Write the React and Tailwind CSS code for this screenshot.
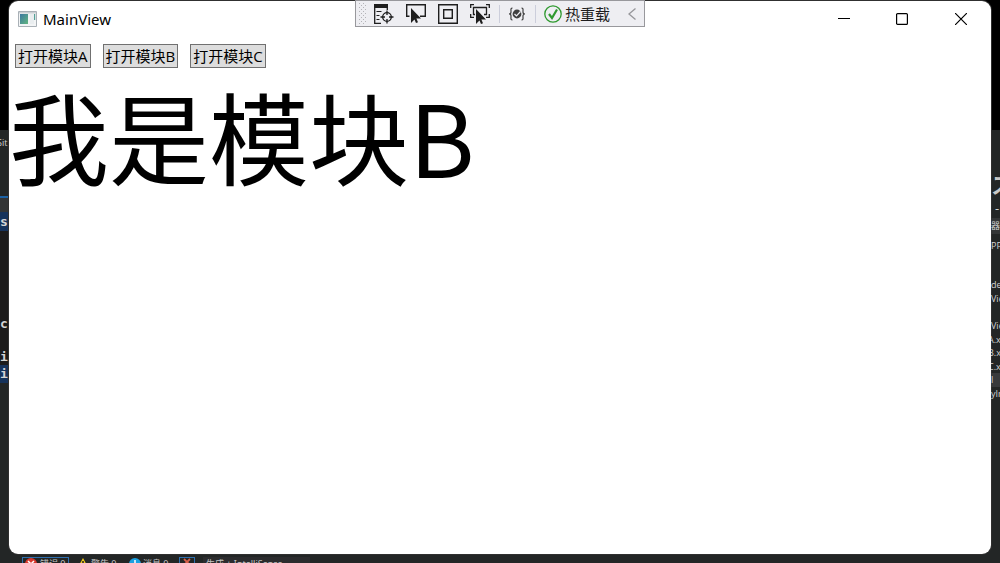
import React, { useState } from "react";

const MODULES = ["A", "B", "C"];

const LEFT_LINES = [
  { text: "", row: "h-[5px]" },
  { text: "Sit", row: "h-4 font-['Open_Sans',sans-serif] text-[9px] leading-4 -ml-[3px] text-[#d0d0d0]" },
  { text: "", row: "h-[45px]" },
  { text: "", row: "h-[2px] bg-[#1c62a5]" },
  { text: "", row: "h-[14px] bg-[#333536]" },
  { text: "s", row: "h-[19px] bg-[#16335c] text-[13px] font-bold leading-[19px]" },
  { text: "", row: "h-[84px] bg-[#1c1b1b]" },
  { text: "c", row: "h-[17px] bg-[#1c1b1b] text-[13px] font-bold leading-[17px]" },
  { text: "", row: "h-4 bg-[#1c1b1b]" },
  { text: "i", row: "h-[17px] bg-[#1c1b1b] text-[13px] font-bold leading-[17px]" },
  { text: "i", row: "h-[18px] bg-[#16335c] text-[13px] font-bold leading-[17px]" },
];

const RIGHT_LINES = [
  { text: "", row: "h-[40px]" },
  { text: "ス", row: "h-7 text-[22px] leading-7 font-bold text-[#c8c8c8]" },
  { text: "-", row: "h-5 text-[13px] leading-5 pl-1" },
  { text: "器", row: "h-4 text-[9px] leading-4 bg-[#343637]" },
  { text: "", row: "h-1" },
  { text: "PP", row: "h-4 text-[9px] leading-4" },
  { text: "", row: "h-6" },
  { text: "de", row: "h-[14px] text-[9px] leading-[14px]" },
  { text: "Vie", row: "h-[14px] text-[9px] leading-[14px]" },
  { text: "", row: "h-[13px]" },
  { text: "Vie", row: "h-[14px] text-[9px] leading-[14px]" },
  { text: "A.x", row: "h-[13px] text-[9px] leading-[13px] -ml-[3px]" },
  { text: "B.x", row: "h-[14px] text-[9px] leading-[14px] -ml-[3px]" },
  { text: "C.x", row: "h-[13px] text-[9px] leading-[13px] -ml-[3px]" },
  { text: "l", row: "h-[14px] text-[9px] leading-[14px] bg-[#383a3c]" },
  { text: "yIn", row: "h-[14px] text-[9px] leading-[14px]" },
];

function EdgeStrip({ lines, mono }) {
  return (
    <div
      className={
        "w-[9px] shrink-0 overflow-hidden whitespace-nowrap pt-[129px] text-[#d4d4d4] " +
        (mono ? "font-['DejaVu_Sans_Mono','Noto_Sans_CJK_SC',monospace]" : "font-['Open_Sans','Noto_Sans_CJK_SC',sans-serif]")
      }
    >
      {lines.map((line, i) => (
        <div key={i} className={line.row}>{line.text}</div>
      ))}
    </div>
  );
}

function DebugToolbar() {
  return (
    <div className="absolute left-1/2 top-0 flex h-[27px] -translate-x-1/2 items-center border border-[#98989c] bg-[#eeeef2] pl-[3px] pr-2 text-[#1e1e1e]">
      <svg className="mr-2 h-[22px] w-[7px]" viewBox="0 0 7 22" fill="#b4b4b8" aria-hidden="true">
        {[0, 4, 8, 12, 16, 20].map((y) => (
          <g key={y}>
            <path d={`M0 ${y}h1v1H0zM4 ${y}h1v1H4z`} />
            <path d={`M2 ${y + 2}h1v1H2zM6 ${y + 2}h1v1H6z`} />
          </g>
        ))}
      </svg>
      <div className="flex gap-3">
        <button aria-label="转到实时可视化树">
          <svg className="block size-5" viewBox="0 0 20 20" fill="none" stroke="#1e1e1e" strokeWidth="1.3">
            <path d="M0 0h14v4H0z" fill="#1e1e1e" stroke="none" />
            <path d="M.7 3v16.300H7M13.300 3v3" />
            <path d="M2.500 7.500h5M2.500 11.500h3M2.500 15.500h3" strokeWidth="1" />
            <circle cx="13" cy="13" r="4.300" />
            <path d="M13 6.500v4.500M13 15v4.500M6.500 13H11M15 13h4.500" />
          </svg>
        </button>
        <button aria-label="选择元素">
          <svg className="block size-5" viewBox="0 0 20 20" fill="none" stroke="#1e1e1e" strokeWidth="1.4">
            <path d="M3.500 12.300H.7V.7h18.600v11.600H14" />
            <path d="M5 4v15l3.500-3.500L10 19l2-.8-1.600-3.700H15z" fill="#1e1e1e" stroke="none" />
          </svg>
        </button>
        <button aria-label="显示布局装饰器">
          <svg className="block size-5" viewBox="0 0 20 20" fill="none" stroke="#1e1e1e" strokeWidth="1.400">
            <path d="M.7.7h18.600v18.600H.7zM5.700 5.700h8.600v8.600H5.700z" />
          </svg>
        </button>
        <button aria-label="跟踪具有焦点的元素">
          <svg className="block size-5" viewBox="0 0 20 20" fill="none" stroke="#1e1e1e" strokeWidth="1.300">
            <path d="M.7 4V.7H4M16 .7h3.300V4M19.300 10v3.300H16M4 13.300H.7V10" />
            <path d="M5 10.500H3.500v-7h13v7H14" />
            <path d="M6 5v15l3.500-3.500L11 20l2-.8-1.600-3.700H16z" fill="#1e1e1e" stroke="none" />
          </svg>
        </button>
      </div>
      <span className="ml-[9px] h-[18px] w-px bg-[#cccedb]" />
      <button className="ml-2" aria-label="绑定失败">
        <svg className="block size-[18px]" viewBox="0 0 18 18" fill="none" stroke="#404040" strokeWidth="1.200">
          <path d="M4.500 3C2.500 3 3 4.500 3 7c0 1.300-.6 2-2 2 1.400 0 2 .7 2 2 0 2.500-.5 4 1.500 4M13.500 3c2 0 1.500 1.500 1.500 4 0 1.300.6 2 2 2-1.400 0-2 .7-2 2 0 2.500.5 4-1.500 4" />
          <circle cx="9" cy="9" r="4.400" fill="#404040" stroke="none" />
          <path d="M6.500 9l2 2 4-4.500" stroke="#eeeef2" />
        </svg>
      </button>
      <span className="ml-[9px] h-[18px] w-px bg-[#cccedb]" />
      <button className="ml-2 flex items-center gap-[3px] text-[15px] leading-5">
        <svg className="size-[18px]" viewBox="0 0 18 18" fill="none" stroke="#2f9a2f" aria-hidden="true">
          <circle cx="9" cy="9" r="8.200" strokeWidth="1.300" />
          <path d="M5 9l3 4 5-8.500" strokeWidth="2.200" />
        </svg>
        热重载
      </button>
      <button className="ml-[18px]" aria-label="折叠工具栏">
        <svg className="block h-3 w-2" viewBox="0 0 8 12" fill="none" stroke="#96969a" strokeWidth="1.300">
          <path d="M7.500.5L1 6l6.500 5.500" />
        </svg>
      </button>
    </div>
  );
}

function TitleBar() {
  return (
    <header className="flex h-9 items-center justify-between pl-[9px]">
      <div className="flex items-center gap-[6px]">
        <svg className="h-4 w-[19px]" viewBox="0 0 19 16" aria-hidden="true">
          <defs>
            <linearGradient id="pane" x1="0" y1="0" x2="1" y2="1">
              <stop offset="0" stopColor="#3c78a0" />
              <stop offset="1" stopColor="#62b680" />
            </linearGradient>
          </defs>
          <path d="M.5.5h18v15H.5z" fill="#f2f4f5" stroke="#a9b0b6" />
          <path d="M1 1h17v1.500H1z" fill="#cbd0d4" />
          <path d="M2 3h8v10H2z" fill="url(#pane)" />
          <path d="M12 3h4v10h-4z" fill="#e9edef" />
          <path d="M16 3h1.200v6H16z" fill="#55a198" />
        </svg>
        <h1 className="font-['Noto_Sans','Open_Sans',sans-serif] text-[15px] leading-5">MainView</h1>
      </div>
      <div className="flex">
        <button className="flex h-9 w-[58px] items-center justify-center" aria-label="最小化">
          <svg className="size-3" viewBox="0 0 12 12" stroke="#000"><path d="M0 5.500h12" /></svg>
        </button>
        <button className="flex h-9 w-[58px] items-center justify-center" aria-label="最大化">
          <svg className="size-3" viewBox="0 0 12 12" fill="none" stroke="#000" strokeWidth="1.200"><rect x=".6" y=".6" width="10.800" height="10.800" rx="1" /></svg>
        </button>
        <button className="flex h-9 w-[60px] items-center justify-center" aria-label="关闭">
          <svg className="size-3" viewBox="0 0 12 12" stroke="#000" strokeWidth="1.200"><path d="M0 0l12 12M12 0L0 12" /></svg>
        </button>
      </div>
    </header>
  );
}

function StatusStrip() {
  return (
    <footer className="flex h-[9px] shrink-0 items-start overflow-hidden pl-[22px] pt-[3px] text-[9px] leading-[14px] text-[#c4c4c4]">
      <button className="flex h-4 w-[47px] shrink-0 gap-[3px] border border-[#2f6fae] pl-[2px] leading-3">
        <svg className="size-3" viewBox="0 0 12 12" aria-hidden="true"><circle cx="6" cy="6" r="6" fill="#d8382e" /><path d="M3 3l6 6M9 3L3 9" stroke="#fff" strokeWidth="1.500" /></svg>
        错误 0
      </button>
      <button className="ml-2 flex h-4 w-11 shrink-0 gap-[2px]">
        <svg className="size-3" viewBox="0 0 12 12" aria-hidden="true"><path d="M6 1l6 11H0z" fill="#f2cb1d" /><path d="M6 4v5" stroke="#222" strokeWidth="1.500" /></svg>
        警告 0
      </button>
      <button className="ml-2 flex h-4 w-11 shrink-0 gap-[2px]">
        <svg className="size-3" viewBox="0 0 12 12" aria-hidden="true"><circle cx="6" cy="7" r="6" fill="#1ba1e2" /><path d="M6 3v7" stroke="#fff" strokeWidth="1.500" /></svg>
        消息 0
      </button>
      <button className="ml-[6px] flex h-4 w-4 shrink-0 justify-center border border-[#2f6fae]" aria-label="清除筛选">
        <svg className="size-2" viewBox="0 0 8 8" stroke="#d8604a" strokeWidth="1.800" aria-hidden="true"><path d="M1 1l6 6M7 1L1 7" /></svg>
      </button>
      <span className="ml-2 h-4 w-[107px] shrink-0 bg-[#2c2c2e] pl-[3px]">生成 + IntelliSense</span>
    </footer>
  );
}

export default function App() {
  const [active, setActive] = useState("B");
  return (
    <div className="relative flex h-screen flex-col overflow-hidden bg-[linear-gradient(#000_130px,#232626_130px)] pt-px font-['Noto_Sans','Noto_Sans_CJK_SC',sans-serif]">
      <div className="flex min-h-0 flex-1">
        <EdgeStrip lines={LEFT_LINES} mono />
        <main className="min-w-0 flex-1 overflow-hidden rounded-[9px] bg-white text-black ring-1 ring-[#303030]">
          <TitleBar />
          <nav className="flex gap-3 px-[6px] pt-[7px] font-['Open_Sans','Noto_Sans_CJK_SC',sans-serif]">
            {MODULES.map((m) => (
              <button
                key={m}
                onClick={() => setActive(m)}
                className="h-6 border border-[#707070] bg-[#dddddd] px-[2px] text-[15px] leading-[22px]"
              >
                打开模块{m}
              </button>
            ))}
          </nav>
          <p className="whitespace-nowrap font-['Noto_Sans_CJK_SC',sans-serif] text-[100px] leading-[134px]">
            我是模块{active}
          </p>
        </main>
        <EdgeStrip lines={RIGHT_LINES} />
      </div>
      <StatusStrip />
      <DebugToolbar />
    </div>
  );
}
